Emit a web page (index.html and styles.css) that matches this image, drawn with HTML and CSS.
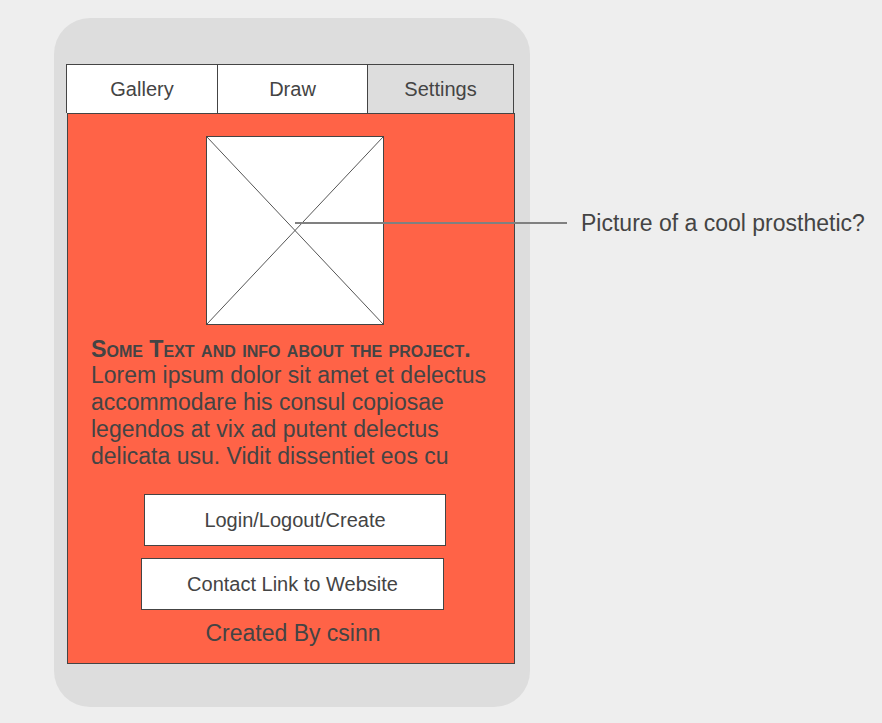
FILE: index.html
```html
<!DOCTYPE html>
<html>
<head>
<meta charset="utf-8">
<link rel="stylesheet" href="styles.css">
</head>
<body>
<div class="stage">
  <div class="phone">
    <div class="tabs">
      <div class="tab">Gallery</div>
      <div class="tab">Draw</div>
      <div class="tab tab-active">Settings</div>
    </div>
    <div class="panel">
      <div class="placeholder">
        <svg width="178" height="189" viewBox="0 0 178 189">
          <rect x="0.5" y="0.5" width="177" height="188" fill="#fff" stroke="#444" stroke-width="1"/>
          <line x1="1" y1="1" x2="177" y2="188" stroke="#555" stroke-width="1"/>
          <line x1="177" y1="1" x2="1" y2="188" stroke="#555" stroke-width="1"/>
        </svg>
      </div>
      <div class="about">
        <div class="about-title">Some Text and info about the project.</div>
        <div class="about-body">Lorem ipsum dolor sit amet et delectus accommodare his consul copiosae legendos at vix ad putent delectus delicata usu. Vidit dissentiet eos cu</div>
      </div>
      <div class="btn btn-login">Login/Logout/Create</div>
      <div class="btn btn-contact">Contact Link to Website</div>
      <div class="credit">Created By csinn</div>
    </div>
  </div>
  <div class="callout">
    <div class="callout-line"></div>
    <div class="callout-text">Picture of a cool prosthetic?</div>
  </div>
</div>
</body>
</html>
```
FILE: styles.css
```css
html, body {
  margin: 0;
  padding: 0;
  background: #eeeeee;
}
body {
  font-family: "Liberation Sans", Arial, sans-serif;
  color: #444444;
  width: 882px;
  height: 723px;
  overflow: hidden;
}
.stage {
  position: relative;
  padding: 18px 0 0 54px;
}
.phone {
  box-sizing: border-box;
  width: 476px;
  height: 689px;
  background: #dddddd;
  border-radius: 36px;
  padding: 46px 0 0 12px;
}
.tabs {
  display: flex;
  width: 448px;
  height: 49px;
  box-sizing: border-box;
  border: 1px solid #444444;
  border-bottom: none;
}
.tab {
  display: flex;
  align-items: center;
  justify-content: center;
  background: #ffffff;
  font-size: 20px;
  padding-top: 1px;
  box-sizing: border-box;
  border-right: 1px solid #444444;
}
.tab:nth-child(1) { width: 151px; }
.tab:nth-child(2) { width: 150px; }
.tab:nth-child(3) { flex: 1; border-right: none; }
.tab-active { background: #dddddd; }
.panel {
  box-sizing: border-box;
  margin-left: 1px;
  width: 448px;
  height: 551px;
  background: #ff6347;
  border: 1px solid #444444;
  display: flex;
  flex-direction: column;
}
.placeholder {
  margin: 22px 0 0 138px;
  height: 189px;
  line-height: 0;
}
.about {
  margin: 11px 0 0 23px;
  width: 405px;
}
.about-title {
  font-weight: bold;
  font-variant: small-caps;
  font-size: 23.2px;
  line-height: 26px;
}
.about-body {
  font-size: 23px;
  line-height: 27px;
}
.btn {
  box-sizing: border-box;
  height: 52px;
  width: 302px;
  background: #ffffff;
  border: 1px solid #444444;
  display: flex;
  align-items: center;
  justify-content: center;
  font-size: 20px;
}
.btn-login {
  margin: 24px 0 0 76px;
}
.btn-contact {
  margin: 12px 0 0 73px;
  width: 303px;
}
.credit {
  margin-top: 9px;
  width: 450px;
  text-align: center;
  font-size: 23px;
  line-height: 28px;
}
.callout {
  position: absolute;
  left: 295px;
  top: 208px;
  display: flex;
  align-items: center;
}
.callout-line {
  width: 272px;
  height: 2px;
  background: #808080;
}
.callout-text {
  margin-left: 14px;
  font-size: 23px;
  line-height: 30px;
  white-space: nowrap;
}
```
